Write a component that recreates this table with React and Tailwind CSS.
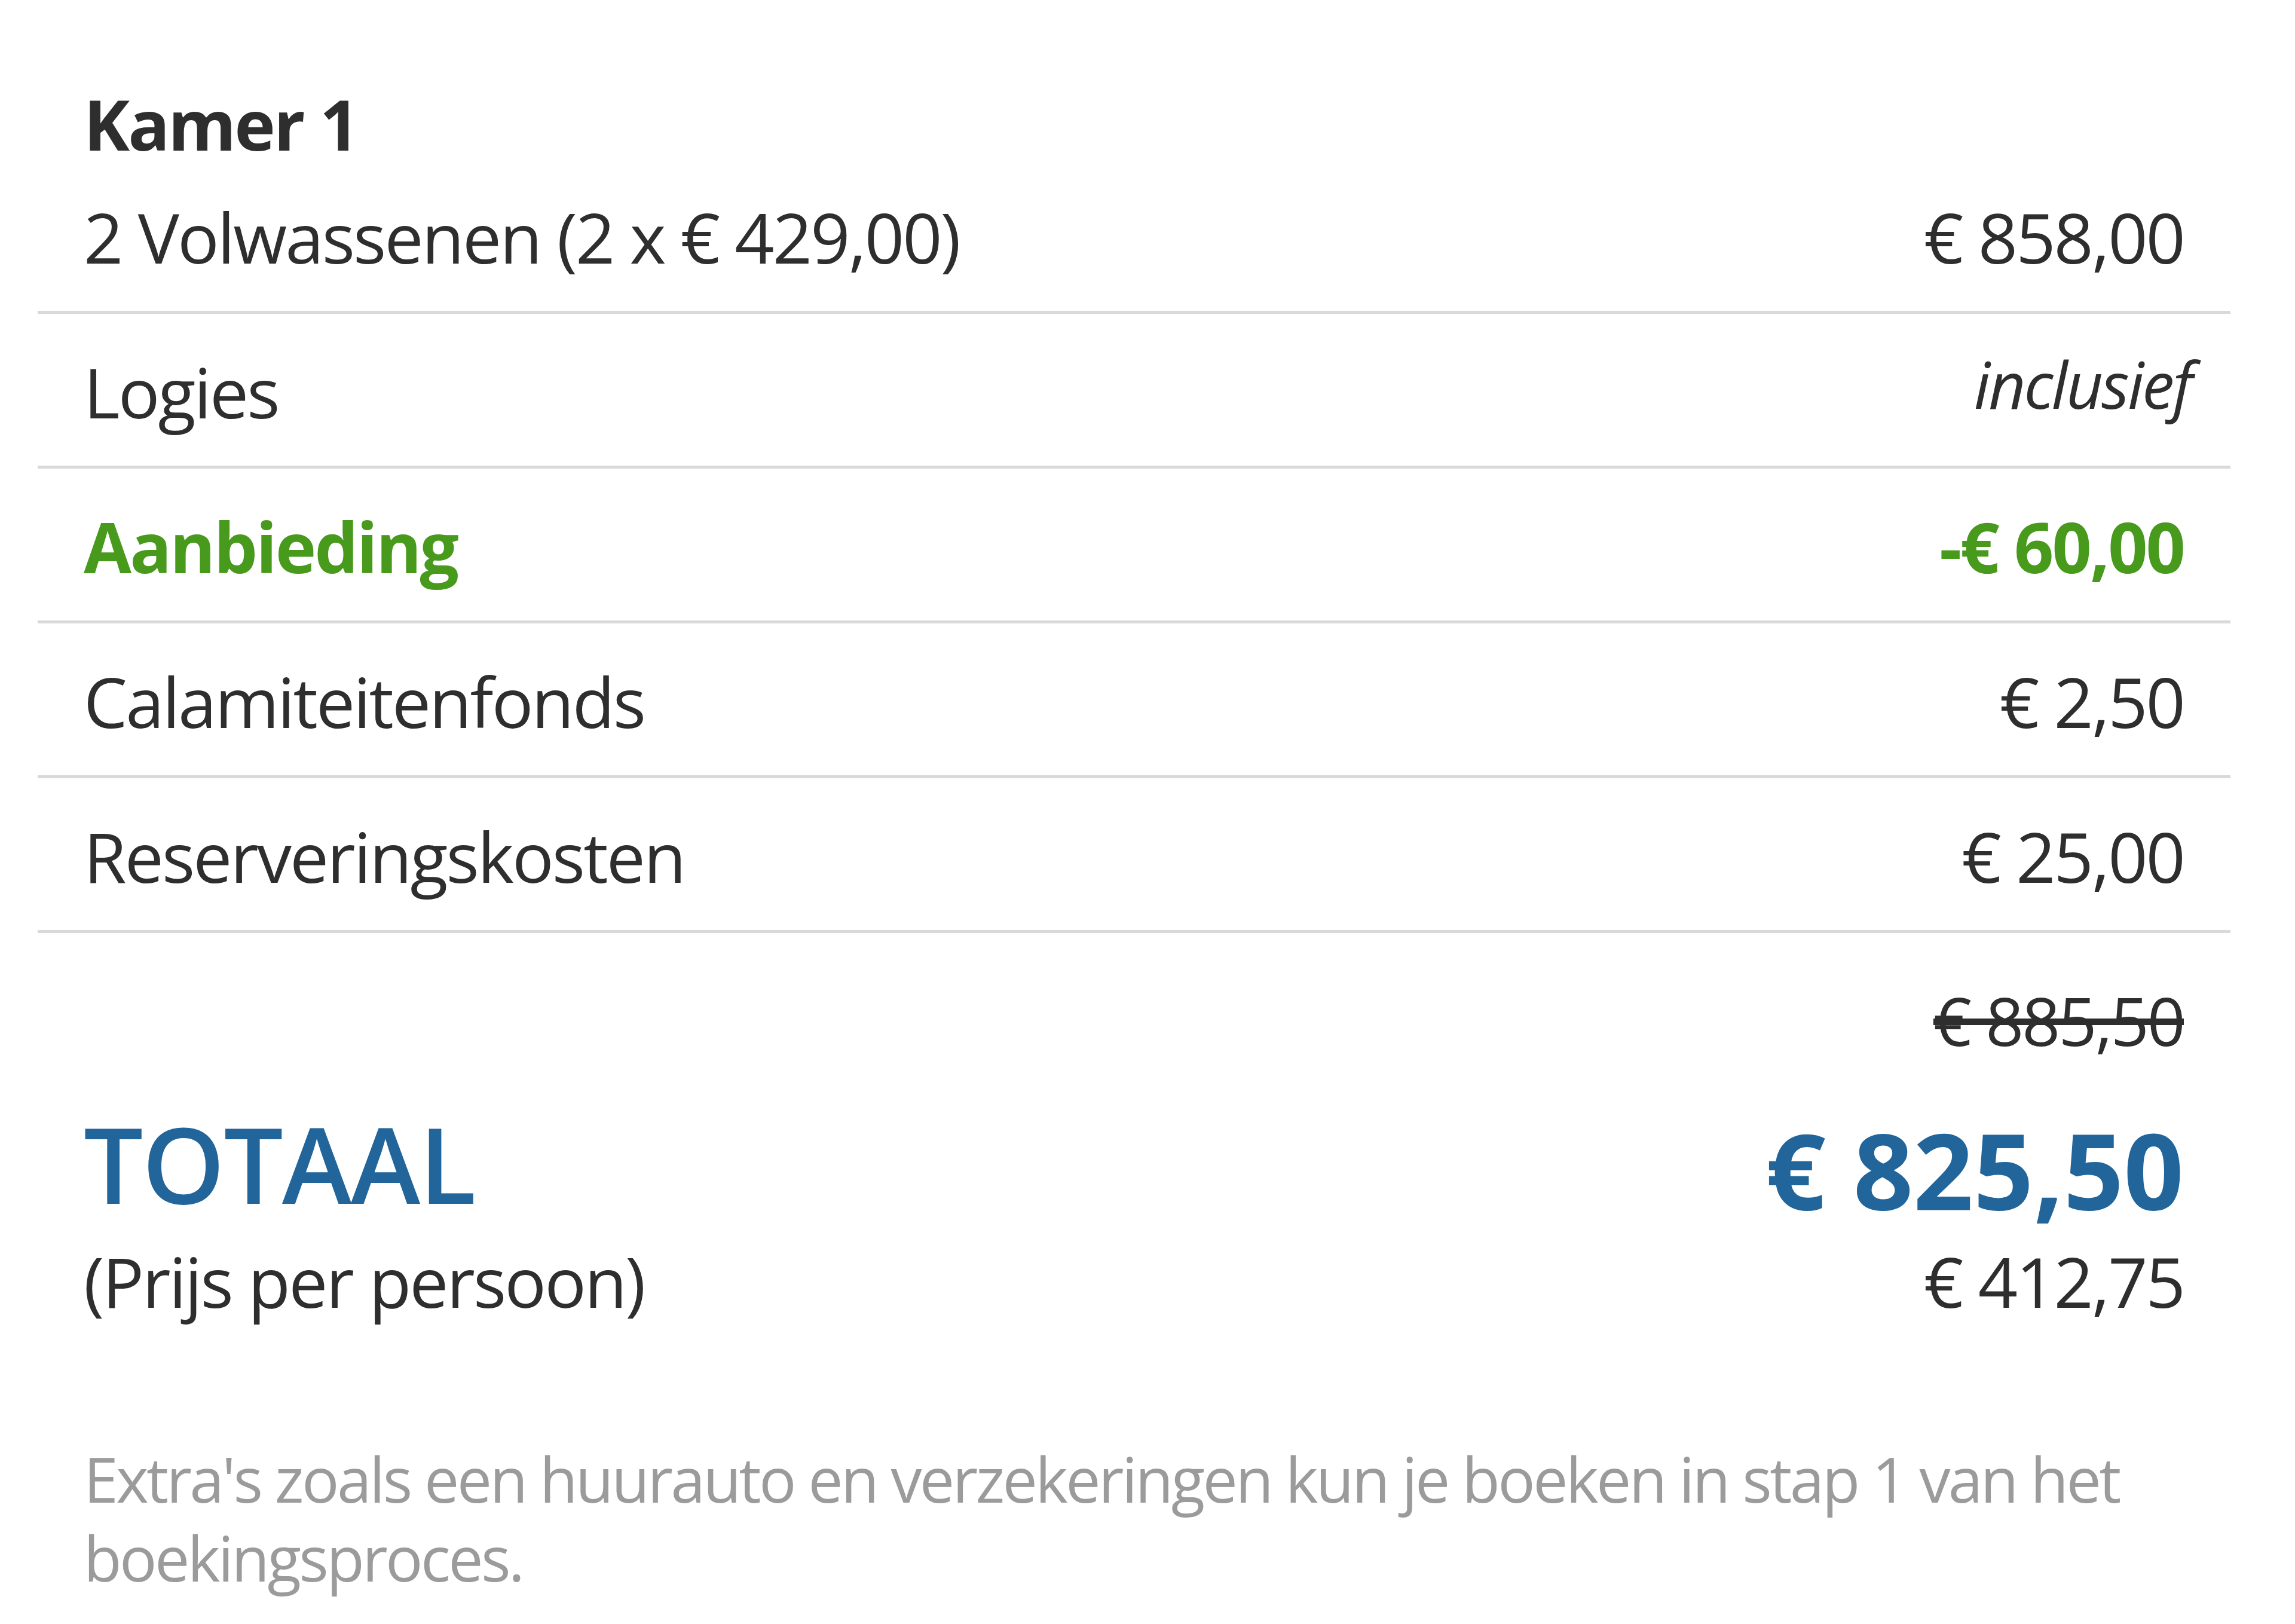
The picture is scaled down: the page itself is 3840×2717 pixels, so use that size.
import React from "react";

const rows = [
  { label: "Logies", value: "inclusief", type: "italic" },
  { label: "Aanbieding", value: "-€ 60,00", type: "offer" },
  { label: "Calamiteitenfonds", value: "€ 2,50" },
  { label: "Reserveringskosten", value: "€ 25,00" },
];

function PriceRow({ label, value, type }) {
  const offer = type === "offer";
  return (
    <div className="flex justify-between items-start pt-[55px] pb-[49px] pl-[77px] pr-[78px] border-b-[5px] border-[#d9d9d9]">
      <span className={`leading-[150px] ${offer ? "font-bold text-[#479a1c]" : ""}`}>{label}</span>
      {type === "italic" ? (
        <span className="italic text-[108px] leading-[126px] -mr-[12px]">{value}</span>
      ) : (
        <span className={`leading-[150px] ${offer ? "font-bold text-[#479a1c]" : ""}`}>{value}</span>
      )}
    </div>
  );
}

export default function App() {
  return (
    <div className="min-h-screen bg-white pl-[63px] pr-[108px] pt-[132px] text-[#2e2e2e] text-[116px] tracking-[-0.025em] font-['Open_Sans',sans-serif]">
      {/* Kamer header + first line */}
      <div className="pl-[77px] pr-[78px] pb-[49px] border-b-[5px] border-[#d9d9d9]">
        <div className="font-bold leading-[150px]">Kamer 1</div>
        <div className="flex justify-between mt-[39px] leading-[150px]">
          <span>2 Volwassenen (2 x € 429,00)</span>
          <span>€ 858,00</span>
        </div>
      </div>

      {rows.map((r) => (
        <PriceRow key={r.label} {...r} />
      ))}

      {/* Totals */}
      <div className="pl-[77px] pr-[78px]">
        <div className="flex justify-end mt-[71px]">
          <span className="text-[112px] leading-[150px] line-through">€ 885,50</span>
        </div>
        <div className="flex justify-between items-start mt-[64px]">
          <span className="text-[176px] leading-[200px] font-semibold tracking-[-0.01em] text-[#21659a]">TOTAAL</span>
          <span className="text-[176px] leading-[200px] font-bold mt-[10px] tracking-normal text-[#21659a]">€ 825,50</span>
        </div>
        <div className="flex justify-between mt-[12px] leading-[150px]">
          <span>(Prijs per persoon)</span>
          <span>€ 412,75</span>
        </div>
        <p className="mt-[190px] text-[104px] leading-[132px] tracking-[-0.035em] text-[#9b9b9b] whitespace-nowrap">
          Extra's zoals een huurauto en verzekeringen kun je boeken in stap 1 van het
          <br />
          boekingsproces.
        </p>
      </div>
    </div>
  );
}
